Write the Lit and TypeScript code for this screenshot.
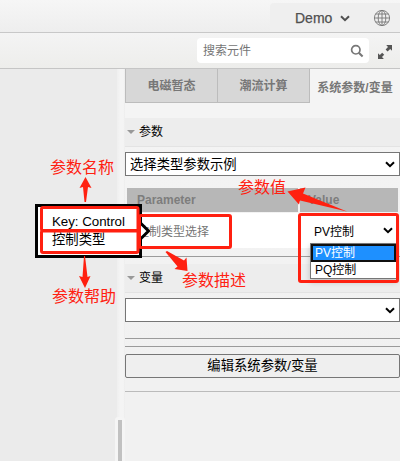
import { LitElement, html, css, svg } from "lit";
import { customElement } from "lit/decorators.js";

const chevron = html`<svg class="chev" width="10" height="7" viewBox="0 0 10 7"><path d="M1 1.2 5 5.2 9 1.2" fill="none" stroke="currentColor" stroke-width="2"/></svg>`;

@customElement("app-root")
export class AppRoot extends LitElement {
  static styles = css`
    :host { display: block; position: relative; width: 400px; height: 461px; overflow: hidden; background: #ebebeb;
      font: 12px/16px "Liberation Sans", "Noto Sans CJK SC", sans-serif; color: #000; }
    * { box-sizing: border-box; }
    .app { display: flex; flex-direction: column; height: 461px; }
    .top { flex: none; height: 33px; display: flex; justify-content: flex-end; align-items: center; background: linear-gradient(#f6f6f6, #eeeeee); border-bottom: 1px solid #c8c8c8; }
    .user { display: flex; align-items: center; height: 29px; width: 130px; margin-top: 3px; padding-left: 25px; background: #efefef; border-radius: 4px 0 0 0; color: #505050; }
    .name { font-size: 14px; width: 45px; -webkit-text-stroke: .25px #505050; }
    .user .chev { margin-top: 2px; }
    .globe { margin-left: 23px; }
    .tools { flex: none; height: 36px; display: flex; justify-content: flex-end; align-items: flex-start; padding: 5px 8px 0 0; background: linear-gradient(#f4f4f4, #ededeb); border-bottom: 1px solid #c5c5c5; }
    .search { display: flex; align-items: center; justify-content: space-between; width: 172px; height: 25px; padding: 0 5px 0 6px; background: #fff; border-radius: 4px; color: #757575; margin-right: 9px; }
    .search span { padding-top: 1px; }
    .expand { margin-top: 7px; }
    .body { flex: 1; display: flex; min-height: 0; }
    .canvas { width: 117px; background: #ebebeb; }
    .resizer { width: 8px; background: linear-gradient(90deg, #efefef, #f4f4f4 40%, #f4f4f4 80%, #ececec); display: flex; align-items: flex-end; }
    .rail { width: 10px; height: 44px; margin-left: -2px; background: #f5f5f5; border-radius: 3px 3px 0 0; padding: 3px 0 0 3px; flex: none; }
    .thumb { width: 4px; height: 41px; background: #c1c1c1; }
    .panel { width: 275px; background: linear-gradient(#f4f4f4, #f1f1f1 75%); display: flex; flex-direction: column; }
    .tabs { flex: none; display: flex; height: 49px; background: #f4f4f4; font-weight: bold; color: #777; }
    .tab { height: 34px; width: 93px; display: flex; align-items: center; justify-content: center; background: #d7d7d7; border: solid #bcbcbc; border-width: 0 1px 1px 0; }
    .tab:first-child { border-left-width: 1px; }
    .tab.mid { width: 92px; }
    .tab.on { flex: 1; background: none; border: 0; padding-top: 3px; white-space: nowrap; }
    .head { flex: none; height: 29px; display: flex; align-items: center; gap: 4px; padding: 0 0 0 2px; background: #ededed; border-bottom: 1px solid #e3e3e3; }
    .tri { width: 0; height: 0; border: solid transparent; border-width: 4px 4px 0; border-top-color: #999; }
    .select { flex: none; display: flex; align-items: center; justify-content: space-between; width: 275px; height: 24px; margin-top: 5px; padding: 0 4px; background: #fff; border: 1px solid #767676; font-size: 13.33px; }
    .select span { padding-top: 2px; }
    .grid { flex: none; display: grid; grid-template-columns: 171px 98px; column-gap: 2px; margin: 12px 2px 0; }
    .th { height: 24px; background: #b7b7b7; color: #7d7d7d; font-weight: bold; padding: 4px 10px; }
    .th + .th { padding-left: 8px; }
    .td { height: 35px; margin-top: 1px; background: #fff; color: #757575; padding: 11px 10px 0; }
    .value { display: flex; justify-content: space-between; align-items: center; color: #000; padding: 0 5px 0 16px; margin-left: -2px; }
    .value span { padding-top: 2px; }
    .rule { flex: none; height: 1px; background: #9b9b9b; }
    .r1 { margin: 8px 0 7px; }
    .r2 { margin-top: 16px; }
    .r3 { margin-top: 7px; }
    .btn { flex: none; height: 24px; margin-top: 7px; border: 1px solid #767676; border-radius: 2px; background: #efefef; display: flex; align-items: center; justify-content: center; font-size: 13.33px; }
    .r4 { margin-top: 13px; background: #bbb; }
    .menu { position: absolute; left: 310px; top: 243px; width: 87px; height: 36px; border: 1px solid #767676; background: #fff; box-shadow: 0 3px 6px #0003; }
    .opt { height: 17px; padding: 0 4px; line-height: 17px; }
    .opt.sel { height: 18px; background: #1e90ff; color: #fff; border: 2px solid #101010; line-height: 15px; padding: 0 2px; }
    .tip { position: absolute; left: 35px; top: 204px; width: 107px; height: 54px; padding: 6px 14px; border: 3px solid #000; background: #fff; font-size: 13.33px; line-height: 18px; white-space: nowrap; }
    .key { letter-spacing: -.04px; }
    .marks { position: absolute; left: 0; top: 0; }
    .note { position: absolute; font-size: 16px; line-height: 20px; color: #ff2010; white-space: nowrap; }
    .n1 { left: 50px; top: 158px; }
    .n2 { left: 52px; top: 287px; }
    .n3 { left: 182px; top: 271px; }
    .n4 { left: 238px; top: 178px; }
  `;

  private box(x: number, y: number, w: number, h: number) {
    return svg`<rect x=${x} y=${y} width=${w} height=${h} rx="1.5" fill="none" stroke="#ff2010" stroke-width="3"/>`;
  }

  render() {
    return html`
      <div class="app">
        <div class="top">
          <div class="user">
            <span class="name">Demo</span>${chevron}
            <svg class="globe" width="18" height="18" viewBox="0 0 18 18" fill="none" stroke="#777" stroke-width=".9">
              <circle cx="9" cy="9" r="7.6"/><ellipse cx="9" cy="9" rx="3.8" ry="7.6"/><path d="M9 1.4v15.2M1.4 9h15.2M2.6 5h12.8M2.6 13h12.8"/>
            </svg>
          </div>
        </div>
        <div class="tools">
          <div class="search"><span>搜索元件</span>
            <svg width="14" height="14" viewBox="0 0 14 14" fill="none" stroke="#777"><circle cx="5.8" cy="5.8" r="4.2" stroke-width="1.7"/><path d="m8.8 8.8 3.8 3.8" stroke-width="2.1"/></svg>
          </div>
          <svg class="expand" width="14" height="14" viewBox="0 0 14 14" fill="#555"><path d="M8.2 0H14v5.8l-1.8-1.8-2.6 2.5-2-2L10 1.9ZM0 8.2l1.8 1.8 2.4-2.3 2 2L4 12.1l1.9 1.9H0Z"/></svg>
        </div>
        <div class="body">
          <div class="canvas"></div>
          <div class="resizer"><div class="rail"><div class="thumb"></div></div></div>
          <div class="panel">
            <div class="tabs"><div class="tab">电磁暂态</div><div class="tab mid">潮流计算</div><div class="tab on">系统参数/变量</div></div>
            <div class="head"><i class="tri"></i>参数</div>
            <div class="select"><span>选择类型参数示例</span>${chevron}</div>
            <div class="grid">
              <div class="th">Parameter</div><div class="th">Value</div>
              <div class="td">控制类型选择</div><div class="td value"><span>PV控制</span>${chevron}</div>
            </div>
            <div class="rule r1"></div>
            <div class="head"><i class="tri"></i>变量</div>
            <div class="select"><span></span>${chevron}</div>
            <div class="rule r2"></div>
            <div class="rule r3"></div>
            <div class="btn">编辑系统参数/变量</div>
            <div class="rule r4"></div>
          </div>
        </div>
      </div>
      <div class="menu"><div class="opt sel">PV控制</div><div class="opt">PQ控制</div></div>
      <div class="tip"><div class="key">Key: Control</div><div>控制类型</div></div>
      <svg class="marks" width="400" height="461" viewBox="0 0 400 461">
        <path d="M141 223.5 148.5 231 141 238.5Z" fill="#fff"/>
        <path d="M141 223.5 148.5 231 141 238.5" fill="none" stroke="#000" stroke-width="3"/>
        ${this.box(41.5, 207.5, 96.5, 23)}
        ${this.box(41.5, 231, 96.5, 21.5)}
        ${this.box(139.5, 215.5, 91, 32)}
        ${this.box(299.5, 214.5, 98, 67)}
        <g fill="#ff2010">
          <path d="M85.5 177 91.5 188 88 187 86 202H84.5L83 187 79.5 188Z"/>
          <path d="M84 256H85L87.5 277 90.5 276 85 288 79 276 82.5 277Z"/>
          <path d="M167 251 184 260.5 186.5 257.5 187.5 271 174.5 269 177.5 266.5 165.5 252Z"/>
          <path d="M287.5 191.5 305.5 187.5 303 193.5 347 211.5 300 200.5 299 204.5Z"/>
        </g>
      </svg>
      <div class="note n1">参数名称</div><div class="note n2">参数帮助</div><div class="note n3">参数描述</div><div class="note n4">参数值</div>
    `;
  }
}
